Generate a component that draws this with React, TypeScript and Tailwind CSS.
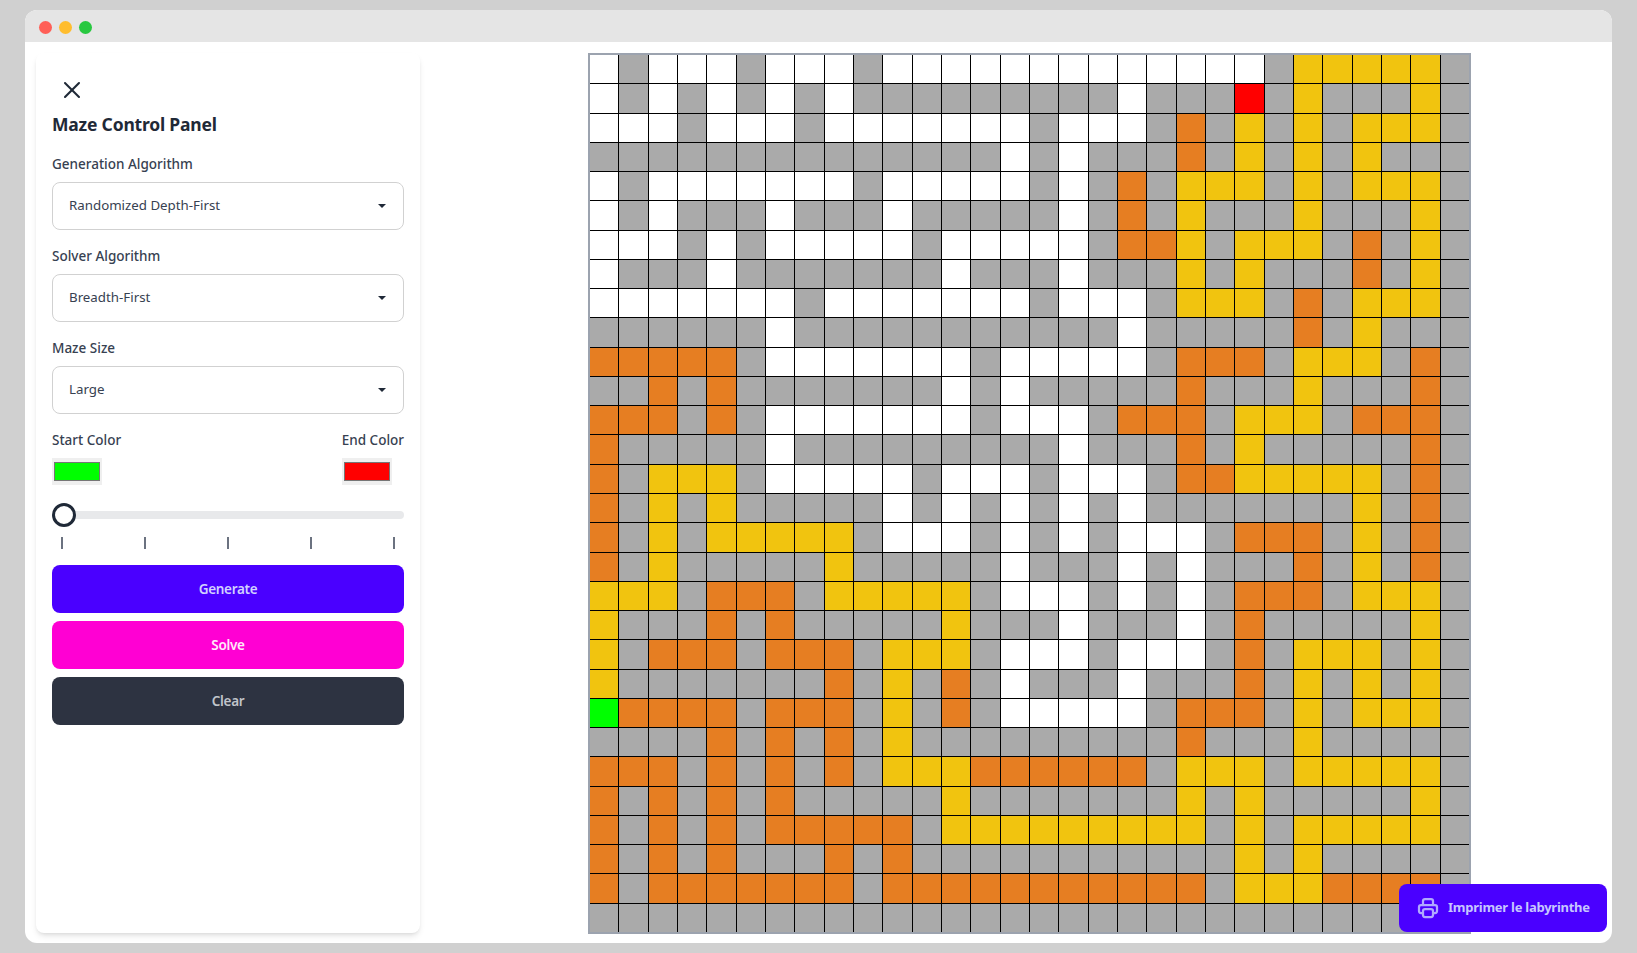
import { X } from "lucide-react";
import { TbPrinter } from "react-icons/tb";

const maze = [
  "WGWWWGWWWGWWWWWWWWWWWWWGYYYYYG",
  "WGWGWGWGWGGGGGGGGGWGGGEGYGGGYG",
  "WWWGWWWGWWWWWWWGWWWGOGYGYGYYYG",
  "GGGGGGGGGGGGGGWGWGGGOGYGYGYGGG",
  "WGWWWWWWWGWWWWWGWGOGYYYGYGYYYG",
  "WGWGGGWGGGWGGGGGWGOGYGGGYGGGYG",
  "WWWGWGWWWWWGWWWWWGOOYGYYYGOGYG",
  "WGGGWGGGGGGGWGGGWGGGYGYGGGOGYG",
  "WWWWWWWGWWWWWWWGWWWGYYYGOGYYYG",
  "GGGGGGWGGGGGGGGGGGWGGGGGOGYGGG",
  "OOOOOGWWWWWWWGWWWWWGOOOGYYYGOG",
  "GGOGOGGGGGGGWGWGGGGGOGGGYGGGOG",
  "OOOGOGWWWWWWWGWWWGOOOGYYYGOOOG",
  "OGGGGGWGGGGGGGGGWGGGOGYGGGGGOG",
  "OGYYYGWWWWWGWWWGWWWGOOYYYYYGOG",
  "OGYGYGGGGGWGWGWGWGWGGGGGGGYGOG",
  "OGYGYYYYYGWWWGWGWGWWWGOOOGYGOG",
  "OGYGGGGGYGGGGGWGGGWGWGGGOGYGOG",
  "YYYGOOOGYYYYYGWWWGWGWGOOOGYYYG",
  "YGGGOGOGGGGGYGGGWGGGWGOGGGGGYG",
  "YGOOOGOOOGYYYGWWWGWWWGOGYYYGYG",
  "YGGGGGGGOGYGOGWGGGWGGGOGYGYGYG",
  "SOOOOGOOOGYGOGWWWWWGOOOGYGYYYG",
  "GGGGOGOGOGYGGGGGGGGGOGGGYGGGGG",
  "OOOGOGOGOGYYYOOOOOOGYYYGYYYYYG",
  "OGOGOGOGGGGGYGGGGGGGYGYGGGGGYG",
  "OGOGOGOOOOOGYYYYYYYYYGYGYYYYYG",
  "OGOGOGGGOGOGGGGGGGGGGGYGYGGGGG",
  "OGOOOOOOOGOOOOOOOOOOOGYYYOOOOG",
  "GGGGGGGGGGGGGGGGGGGGGGGGGGGGGG",
];

const cellColors: Record<string, string> = {
  W: "bg-white",
  G: "bg-[#aaaaaa]",
  O: "bg-[#e67e22]",
  Y: "bg-[#f1c40f]",
  S: "bg-[#00ff00]",
  E: "bg-[#ff0000]",
};

function SelectField({ label, value }: { label: string; value: string }) {
  return (
    <div>
      <p className="text-[13.5px] leading-5 font-medium text-[#374151]">{label}</p>
      <div className="mt-2 flex h-12 items-center justify-between rounded-lg border-[1.5px] border-[#d1d1d1] pr-[17px] pl-4 text-[13.3px] text-[#374151]">
        <span>{value}</span>
        <span className="h-0 w-0 border-x-[4px] border-t-[4px] border-x-transparent border-t-[#1f2937]" />
      </div>
    </div>
  );
}

function ColorSwatch({ color }: { color: string }) {
  return (
    <div className="mt-2 flex h-[27px] w-[50px] items-center bg-[#efefef] px-[2px]">
      <div className={`h-[19px] w-[46px] border border-[#767676] ${color}`} />
    </div>
  );
}

export default function App() {
  return (
    <div className="h-[953px] overflow-hidden bg-[#d0d0d0] px-[25px] py-[10px] font-['Noto_Sans',sans-serif]">
      <div className="relative h-[933px] overflow-hidden rounded-xl bg-white">
        <div className="flex h-8 items-center gap-[7px] bg-[#e5e5e5] pt-[2px] pl-[14px]">
          <span className="size-[13px] rounded-full bg-[#ff5f57]" />
          <span className="size-[13px] rounded-full bg-[#ffbd2e]" />
          <span className="size-[13px] rounded-full bg-[#28c840]" />
        </div>

        <div className="flex pt-[11px] pl-[11px]">
          <aside className="flex h-[880px] w-[384px] flex-col rounded-lg bg-white px-4 shadow-md">
            <button className="mt-[23px] ml-[6px] flex size-7 items-center justify-center text-[#1f2937]">
              <X size={28} strokeWidth={1.75} />
            </button>
            <h2 className="mt-[6px] text-[17.5px] leading-7 font-bold tracking-[-0.2px] text-[#1f2937]">
              Maze Control Panel
            </h2>

            <div className="mt-4 flex flex-col gap-4">
              <SelectField label="Generation Algorithm" value="Randomized Depth-First" />
              <SelectField label="Solver Algorithm" value="Breadth-First" />
              <SelectField label="Maze Size" value="Large" />
            </div>

            <div className="mt-4 flex justify-between">
              <div>
                <p className="text-[13.5px] leading-5 font-medium text-[#374151]">Start Color</p>
                <ColorSwatch color="bg-[#00ff00]" />
              </div>
              <div>
                <p className="text-[13.5px] leading-5 font-medium text-[#374151]">End Color</p>
                <ColorSwatch color="bg-[#ff0000]" />
              </div>
            </div>

            <div className="relative mt-[18px] flex h-6 items-center">
              <div className="h-2 w-full rounded-full bg-[#e8e9eb]" />
              <span className="absolute left-0 size-6 rounded-full border-[3.5px] border-[#1f2937] bg-white" />
            </div>
            <div className="mt-[10px] flex justify-between px-[9px]">
              {[0, 1, 2, 3, 4].map((tick) => (
                <span key={tick} className="h-3 w-[2px] bg-[#6b7280]" />
              ))}
            </div>

            <div className="mt-4 flex flex-col gap-2 text-[13.5px] font-semibold tracking-[-0.3px]">
              <button className="h-12 rounded-lg bg-[#4a00ff] text-[#d1d1ff]">Generate</button>
              <button className="h-12 rounded-lg bg-[#ff00d3] text-[#ffeaf9]">Solve</button>
              <button className="h-12 rounded-lg bg-[#2d3341] text-[#c0c4ca]">Clear</button>
            </div>
          </aside>

          <main className="ml-[168px]">
            <div className="grid h-[881px] w-[883px] grid-cols-[repeat(30,1fr)] grid-rows-[repeat(30,1fr)] gap-px border-2 border-[#9ca3af] bg-black">
              {maze.map((row, y) =>
                row.split("").map((cell, x) => <div key={`${x}-${y}`} className={cellColors[cell]} />),
              )}
            </div>
          </main>
        </div>

        <button className="absolute top-[874px] left-[1374px] flex h-12 w-[208px] items-center gap-2 rounded-lg bg-[#4a00ff] pl-[17px] text-[13px] font-bold tracking-[-0.25px] text-[#c6c6ff]">
          <TbPrinter size={24} strokeWidth={2.25} className="text-[#b0a8ff]" />
          Imprimer le labyrinthe
        </button>
      </div>
    </div>
  );
}
